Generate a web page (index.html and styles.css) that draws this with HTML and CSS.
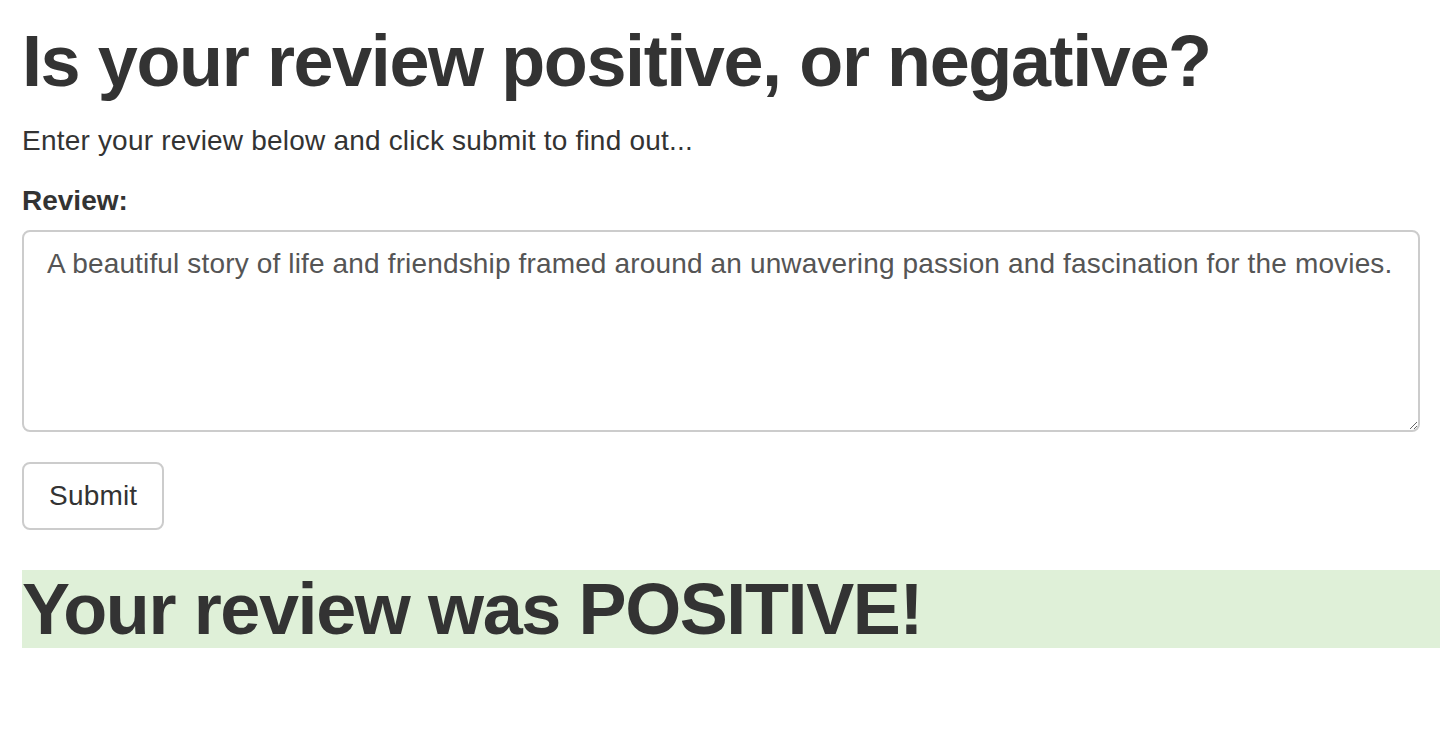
FILE: index.html
```html
<!DOCTYPE html>
<html>
<head>
<meta charset="utf-8">
<link rel="stylesheet" href="styles.css">
</head>
<body>
<main class="page">
  <h1 class="title">Is your review positive, or negative?</h1>
  <p class="lead">Enter your review below and click submit to find out...</p>
  <form class="form">
    <label class="label" for="review">Review:</label>
    <textarea id="review" class="review">A beautiful story of life and friendship framed around an unwavering passion and fascination for the movies.</textarea>
    <button type="button" class="submit">Submit</button>
  </form>
  <h1 class="result">Your review was POSITIVE!</h1>
</main>
</body>
</html>
```
FILE: styles.css
```css
html, body {
  margin: 0;
  padding: 0;
  background: #fff;
}
body {
  font-family: "Liberation Sans", Arial, sans-serif;
  color: #333;
}
.page {
  padding-left: 22px;
  display: flex;
  flex-direction: column;
}
.title {
  margin: 22px 0 0 0;
  font-size: 72px;
  line-height: 79px;
  font-weight: 700;
  letter-spacing: -1.4px;
  color: #333;
}
.lead {
  margin: 20px 0 0 0;
  font-size: 28px;
  line-height: 40px;
  letter-spacing: 0.2px;
}
.form {
  display: flex;
  flex-direction: column;
  align-items: flex-start;
}
.label {
  margin-top: 20px;
  font-size: 28px;
  font-weight: 700;
  line-height: 40px;
}
.review {
  box-sizing: border-box;
  margin-top: 9px;
  width: calc(100% - 20px);
  height: 202px;
  padding: 12px 24px 12px 23px;
  border: 2px solid #ccc;
  border-radius: 8px;
  font-family: "Liberation Sans", Arial, sans-serif;
  font-size: 28px;
  line-height: 40px;
  letter-spacing: 0.15px;
  color: #555;
  resize: vertical;
}
.submit {
  box-sizing: border-box;
  margin-top: 30px;
  height: 68px;
  padding: 0 25px;
  background: #fff;
  border: 2px solid #ccc;
  border-radius: 8px;
  font-family: "Liberation Sans", Arial, sans-serif;
  font-size: 28px;
  letter-spacing: 0.2px;
  color: #333;
}
.result {
  margin: 40px 0 0 0;
  background: #dff0d8;
  font-size: 72px;
  line-height: 78px;
  font-weight: 700;
  letter-spacing: -1.4px;
  color: #333;
}
```
